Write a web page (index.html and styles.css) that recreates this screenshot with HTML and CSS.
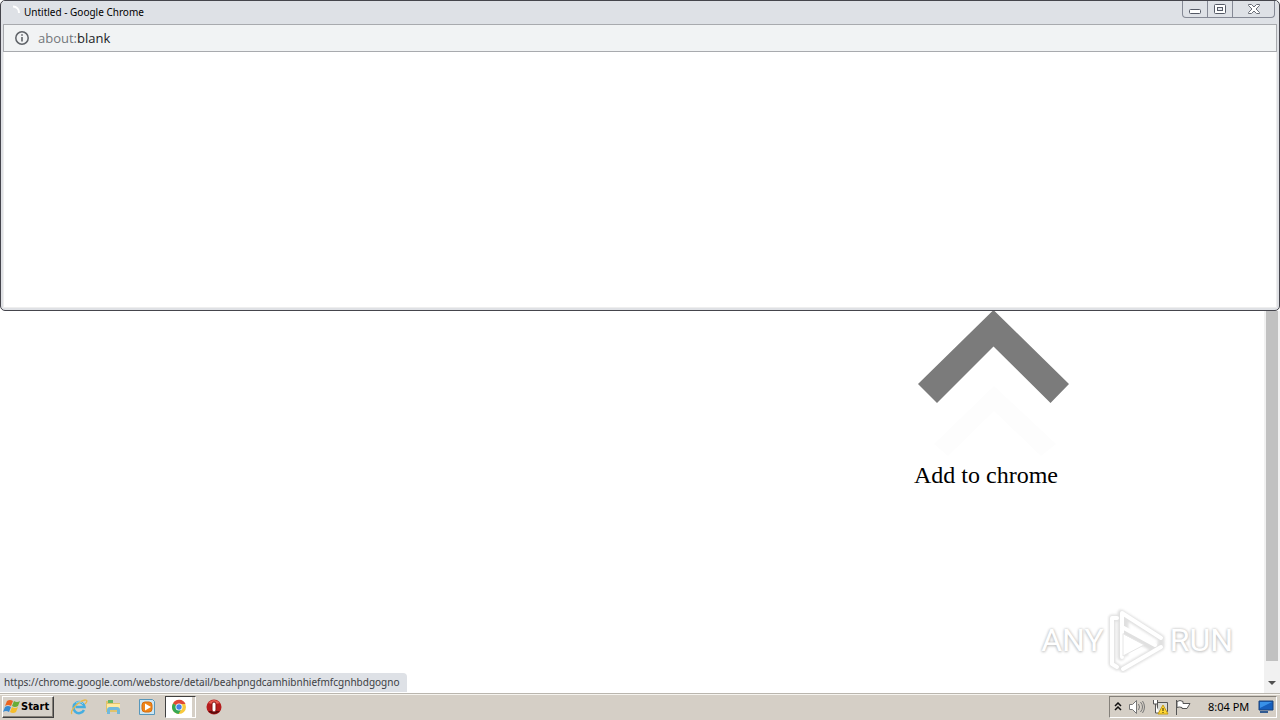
FILE: index.html
```
<!DOCTYPE html>
<html lang="en">
<head>
<meta charset="utf-8">
<title>Untitled - Google Chrome</title>
<link rel="stylesheet" href="styles.css">
</head>
<body>
<div class="desktop">
  <section class="popup">
    <header class="titlebar">
      <svg class="spinner" width="14" height="14" viewBox="0 0 14 14"><path d="M6 1.5A6 6 0 0 1 12 8" fill="none" stroke="#fff" stroke-width="2"/></svg>
      <span class="title">Untitled - Google Chrome</span>
      <div class="controls">
        <button class="control" aria-label="Minimize"><svg width="14" height="14" viewBox="0 0 14 14"><rect x="1.5" y="7.5" width="11" height="4" rx="1" fill="#fff" stroke="#555a66"/></svg></button>
        <button class="control" aria-label="Maximize"><svg width="14" height="14" viewBox="0 0 14 14"><rect x="1.5" y="2.5" width="11" height="9" rx="1" fill="#fff" stroke="#555a66"/><rect x="4.5" y="5.5" width="5" height="3" fill="#e4e7ec" stroke="#555a66"/></svg></button>
        <button class="control control-close" aria-label="Close"><svg width="14" height="14" viewBox="0 0 14 14"><path d="M1.5 2.500h3l2.500 2.500 2.500-2.500h3v1L9 7l3.500 3.500v1h-3L7 9l-2.500 2.500h-3v-1L5 7 1.500 3.500z" fill="#fff" stroke="#6a6e78"/></svg></button>
      </div>
    </header>
    <div class="address">
      <svg width="14" height="14" viewBox="0 0 14 14" fill="none" stroke="#5f6368"><circle cx="7" cy="7" r="6.2" stroke-width="1.500"/><path d="M7 6v4.500M7 3.200v1.600" stroke-width="1.600"/></svg>
      <span class="url"><span class="scheme">about:</span>blank</span>
    </div>
    <div class="blank"></div>
  </section>
  <main class="page">
    <div class="content">
      <figure class="prompt">
        <svg class="arrow" width="156" height="149" viewBox="0 0 156 149"><path d="M20 133L80 75L142 133L127 145L80 100L34 145z" fill="#fdfdfd"/><path d="M79.5-1L155 73L136.500 92L79.500 35.500L23 92L4 73z" fill="#7b7b7b"/></svg>
        <figcaption class="caption">Add to chrome</figcaption>
      </figure>
    </div>
    <div class="scrollbar">
      <div class="thumb"></div>
      <button class="scroll-down" aria-label="Scroll down"><svg width="8" height="4" viewBox="0 0 8 4"><path d="M0 0h8L4 4z" fill="#505050"/></svg></button>
    </div>
    <div class="status">https://chrome.google.com/webstore/detail/beahpngdcamhibnhiefmfcgnhbdgogno</div>
    <div class="watermark">
      <span>ANY</span>
      <svg width="60" height="66" viewBox="0 0 60 66" fill="none" stroke-linejoin="round" stroke-linecap="round"><g class="mark-shadow" stroke="#e0e0e0" stroke-width="7"><path d="M9 11H5V57l5 3M14 50V6L54 31M18 14V46M14 24L48 42M16 62L54 40V34"/></g><g stroke="#fff" stroke-width="4"><path d="M10 11H5V57l5 3M15 50V6L54 31M15 20L48 38M16 62L54 40"/></g><path d="M16 27V49L37 38z" fill="#fff" stroke="#e6e6e6"/></svg>
      <span>RUN</span>
    </div>
  </main>
  <footer class="taskbar">
    <button class="start"><svg width="18" height="16" viewBox="0 0 18 16"><path d="M4 2Q7 0 10 2L8 7Q5 5 2 7z" fill="#eb6421"/><path d="M11 2Q14 4 17 2L15 7Q12 9 9 7z" fill="#69ad38"/><path d="M2 8Q5 6 8 8L6 13Q3 11 0 13z" fill="#388bd2"/><path d="M9 8Q12 10 15 8L13 13Q10 15 7 13z" fill="#f5bd2b"/></svg>Start</button>
    <nav class="apps">
      <button class="app" aria-label="Internet Explorer"><svg width="18" height="18" viewBox="0 0 18 18" fill="none"><path d="M14 12A5.500 5.500 0 1 1 14.500 9H5.500" stroke="#45aee0" stroke-width="2.500"/><path d="M2 16C-1 14 8 3 15 2C18 2 17 4 15 6" stroke="#e8b849" stroke-width="1.300"/><path d="M6 5Q10 2 13 6" stroke="#92d6f4"/></svg></button>
      <button class="app" aria-label="File Explorer"><svg width="18" height="18" viewBox="0 0 18 18"><path d="M2 3h6l1 2h7v9H2z" fill="#e0c36c"/><path d="M4 2h5v3H4z" fill="#65b665"/><path d="M3 6h13v6H3z" fill="#ffeaa0"/><path d="M3 16v-4q0-3 3-3h7q3 0 3 3v4h-3v-4H6v4z" fill="#70b9dc"/></svg></button>
      <button class="app" aria-label="Media Player"><svg width="18" height="18" viewBox="0 0 18 18"><path d="M1.5 1.500h13l2 2v13h-15z" fill="#cce6f3" stroke="#5797bb"/><rect x="4" y="4" width="10" height="10" rx="3" fill="#ef8518" stroke="#d66c0d"/><path d="M7 5.500L13 9l-6 3.500z" fill="#fff"/></svg></button>
      <button class="app app-active" aria-label="Google Chrome"><svg width="16" height="16" viewBox="0 0 16 16"><circle cx="8" cy="8" r="7" fill="#f8c93c"/><path d="M8 8L2 4.400A7 7 0 0 1 14.500 5H8z" fill="#df4937"/><path d="M8 8L2 4.400A7 7 0 0 0 7.500 15L11 9z" fill="#35a853"/><circle cx="8" cy="8" r="3.500" fill="#fff"/><circle cx="8" cy="8" r="2.700" fill="#4383e8"/></svg></button>
      <button class="app" aria-label="Opera"><svg width="18" height="18" viewBox="0 0 18 18"><circle cx="9" cy="9" r="7.500" fill="#b51c1d"/><path d="M3 5Q9-1 15 5Q9 7 3 5" fill="#e65b50"/><path d="M3 13Q9 19 15 13" fill="#5b0c0c"/><rect x="7" y="4" width="4" height="10" rx="2" fill="#fff" stroke="#851011"/></svg></button>
    </nav>
    <div class="tray">
      <svg width="8" height="10" viewBox="0 0 8 10" fill="none" stroke="#111" stroke-width="1.500"><path d="M1 4l3-3 3 3M1 8l3-3 3 3"/></svg>
      <svg width="18" height="16" viewBox="0 0 18 16" fill="none" stroke="#777"><path d="M1.500 5.500h3l4-4v13l-4-4h-3z" fill="#fff"/><path d="M10.500 5q2 3 0 6M12.500 3q4 5 0 10M14.500 2q4 6 0 12"/></svg>
      <svg width="17" height="16" viewBox="0 0 17 16"><path d="M5.500 3.500h10v9h-10z" fill="#dadbd5" stroke="#555"/><path d="M1.500 1v4h4V1M3.500 5v9h4" fill="#fff" stroke="#555"/><path d="M11 6L16 15H6z" fill="#ffd735" stroke="#c79c12"/><path d="M11 9v3M11 13v1" stroke="#332900"/></svg>
      <svg width="18" height="16" viewBox="0 0 18 16" fill="#fff" stroke="#555"><path d="M1.500 1v15M2 2.500q3-2 6 0v2h7l-3 5H7v-1q-3-1-5 0z"/></svg>
      <time class="clock">8:04 PM</time>
      <svg width="16" height="14" viewBox="0 0 16 14"><path d="M1 1h14v9H1z" fill="#175fbd" stroke="#1b427a"/><path d="M2 2h12L2 8z" fill="#3991e8"/><path d="M2 12h8" stroke="#315b91" stroke-width="2"/></svg>
    </div>
  </footer>
</div>
</body>
</html>
```
FILE: styles.css
```
* { box-sizing: border-box; }
body { margin: 0; background: #fff; color: #000; font-family: Tahoma, "DejaVu Sans Condensed", "Noto Sans", sans-serif; font-size: 11px; }
button { font: inherit; color: inherit; padding: 0; border: 0; background: none; }
svg { display: block; flex: none; }
.desktop { min-height: 100vh; display: flex; flex-direction: column; }
.popup { flex: 0 0 311px; display: flex; flex-direction: column; border: 1px solid #45454c; border-radius: 5px; padding: 0 2px 2px; background: #dfe1e5; }
.titlebar { display: flex; align-items: center; height: 23px; background: #dee1e6; padding: 0 0 2px 4px; gap: 3px; }
.title { flex: 1; white-space: nowrap; font-family: "Noto Sans", sans-serif; font-size: 10px; }
.controls { display: flex; align-self: flex-start; height: 17px; margin-right: 2px; border: 1px solid #858995; border-top: 0; border-radius: 0 0 4px 4px; }
.control { width: 25px; display: flex; justify-content: center; align-items: center; border-right: 1px solid #858995; }
.control-close { width: 41px; border-right: 0; }
.address { display: flex; align-items: center; height: 28px; padding-left: 11px; gap: 9px; background: #f1f3f4; border: 1px solid #a8aaae; }
.url { font-family: "Open Sans", sans-serif; font-size: 13px; color: #202124; }
.scheme { color: #73777b; }
.blank { flex: 1; background: #fff; border: 1px solid #eee; border-top: 0; }
.page { flex: 1; display: flex; position: relative; }
.content { flex: 1; display: flex; justify-content: flex-end; padding-right: 194px; }
.prompt { margin: 0; }
.caption { font: 24px/30px "Liberation Serif", serif; white-space: nowrap; }
.scrollbar { width: 16px; display: flex; flex-direction: column; background: #f1f1f1; padding: 0 2px; }
.thumb { flex: 1; background: #c1c1c1; }
.scroll-down { height: 32px; padding-top: 12px; display: flex; justify-content: center; align-items: center; }
.status { position: absolute; left: 0; bottom: 1px; height: 19px; padding: 0 8px 0 4px; line-height: 19px; background: #dee1e6; color: #3c4043; border-radius: 0 4px 0 0; white-space: nowrap; font-family: "Noto Sans", sans-serif; font-size: 10px; }
.watermark { position: absolute; right: 47px; bottom: 20px; display: flex; align-items: center; gap: 3px; color: #fff; font: 32px/66px Roboto, sans-serif; text-shadow: 0 0 3px #bbb, 0 1px 3px #ccc; }
.mark-shadow { filter: blur(1px); }
.taskbar { display: flex; align-items: center; height: 27px; background: #d5cfc6; border-top: 1px solid #bab6ae; box-shadow: inset 0 1px #f6f4ef; padding: 0 3px 1px 2px; }
.start { display: flex; align-items: center; height: 22px; width: 52px; border: 1px solid; border-color: #fff #404040 #404040 #fff; box-shadow: inset -1px -1px #858078; font-weight: bold; font-size: 11px; background: #d6d1c9; }
.apps { flex: 1; display: flex; align-items: center; padding-left: 9px; gap: 2px; }
.app { width: 32px; height: 22px; display: flex; align-items: center; justify-content: center; }
.app-active { width: 31px; padding-right: 4px; background: #fff; border: 1px solid; border-color: #404040 #fff #fff #404040; box-shadow: inset -3px 0 #d5cfc6; }
.tray { display: flex; align-items: center; height: 22px; padding: 0 2px 0 4px; gap: 6px; border: 1px solid; border-color: #85817a #fff #fff #85817a; }
.clock { width: 44px; margin-left: 9px; white-space: nowrap; font-family: "Noto Sans", sans-serif; font-size: 11px; }
```
